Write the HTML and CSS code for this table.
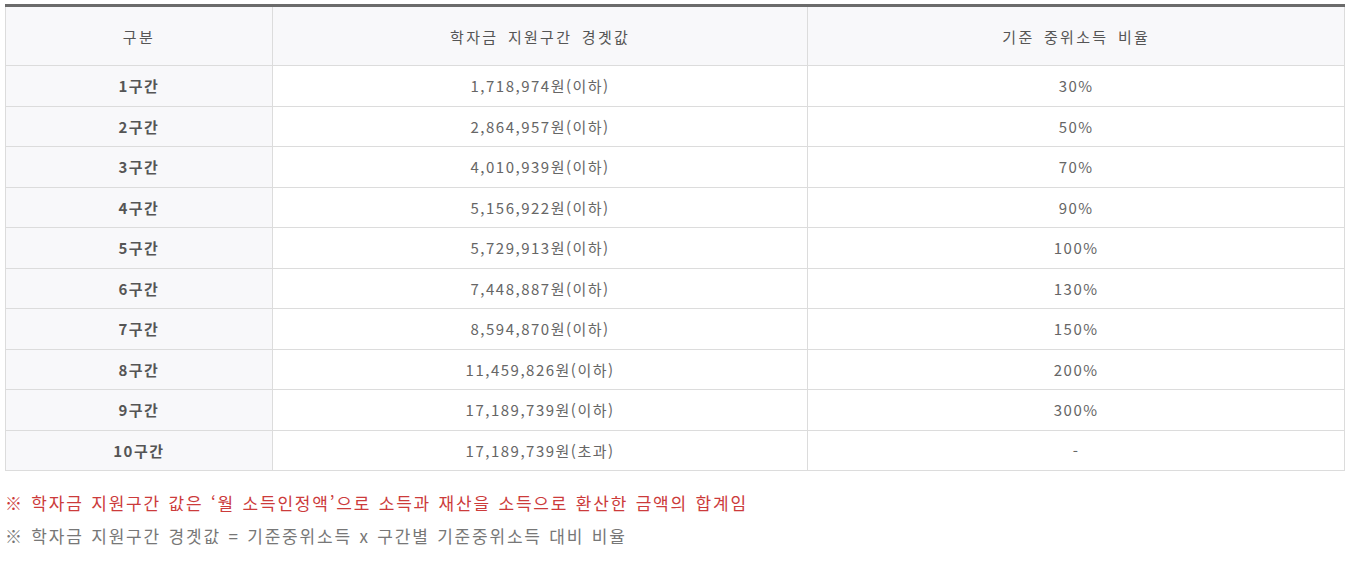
FILE: index.html
```html
<!DOCTYPE html>
<html lang="ko">
<head>
<meta charset="utf-8">
<link rel="stylesheet" href="styles.css">
</head>
<body>
<div class="wrap">
<table class="tbl">
  <colgroup><col class="c1"><col class="c2"><col class="c3"></colgroup>
  <thead>
    <tr><th>구분</th><th>학자금 지원구간 경곗값</th><th>기준 중위소득 비율</th></tr>
  </thead>
  <tbody>
    <tr><th>1구간</th><td>1,718,974원(이하)</td><td>30%</td></tr>
    <tr><th>2구간</th><td>2,864,957원(이하)</td><td>50%</td></tr>
    <tr><th>3구간</th><td>4,010,939원(이하)</td><td>70%</td></tr>
    <tr><th>4구간</th><td>5,156,922원(이하)</td><td>90%</td></tr>
    <tr><th>5구간</th><td>5,729,913원(이하)</td><td>100%</td></tr>
    <tr><th>6구간</th><td>7,448,887원(이하)</td><td>130%</td></tr>
    <tr><th>7구간</th><td>8,594,870원(이하)</td><td>150%</td></tr>
    <tr><th>8구간</th><td>11,459,826원(이하)</td><td>200%</td></tr>
    <tr><th>9구간</th><td>17,189,739원(이하)</td><td>300%</td></tr>
    <tr><th>10구간</th><td>17,189,739원(초과)</td><td>-</td></tr>
  </tbody>
</table>
<p class="note red">※ 학자금 지원구간 값은 ‘월 소득인정액’으로 소득과 재산을 소득으로 환산한 금액의 합계임</p>
<p class="note">※ 학자금 지원구간 경곗값 = 기준중위소득 x 구간별 기준중위소득 대비 비율</p>
</div>
</body>
</html>
```
FILE: styles.css
```css
html, body { margin: 0; padding: 0; background: #fff; }
body {
  font-family: "Noto Sans CJK KR", "Noto Sans", sans-serif;
  color: #555;
}
.wrap { padding: 4px 12px 0 5px; }
.tbl {
  width: 1340px;
  border-collapse: collapse;
  border-top: 3px solid #6b6b6b;
  font-size: 15px;
  letter-spacing: 1.5px;
}
.c1 { width: 267px; }
.c2 { width: 536px; }
.c3 { width: 537px; }
.tbl th, .tbl td {
  border: 1px solid #dcdcdc;
  text-align: center;
  vertical-align: middle;
  padding: 0;
  height: 39.5px;
}
.tbl thead th {
  height: 58px;
  background: #f8f8fa;
  font-weight: 400;
  color: #555;
  font-size: 15px;
  letter-spacing: 2.3px;
  word-spacing: 3px;
}
.tbl tbody th {
  background: #f8f8fa;
  font-weight: 700;
  color: #555;
}
.tbl td { color: #666; }
.note {
  margin: 0;
  font-size: 17px;
  letter-spacing: 1.8px;
  word-spacing: 1px;
  color: #777;
  line-height: 22px;
}
.note.red { color: #cc3b3b; margin-top: 21px; margin-bottom: 11px; }
```
